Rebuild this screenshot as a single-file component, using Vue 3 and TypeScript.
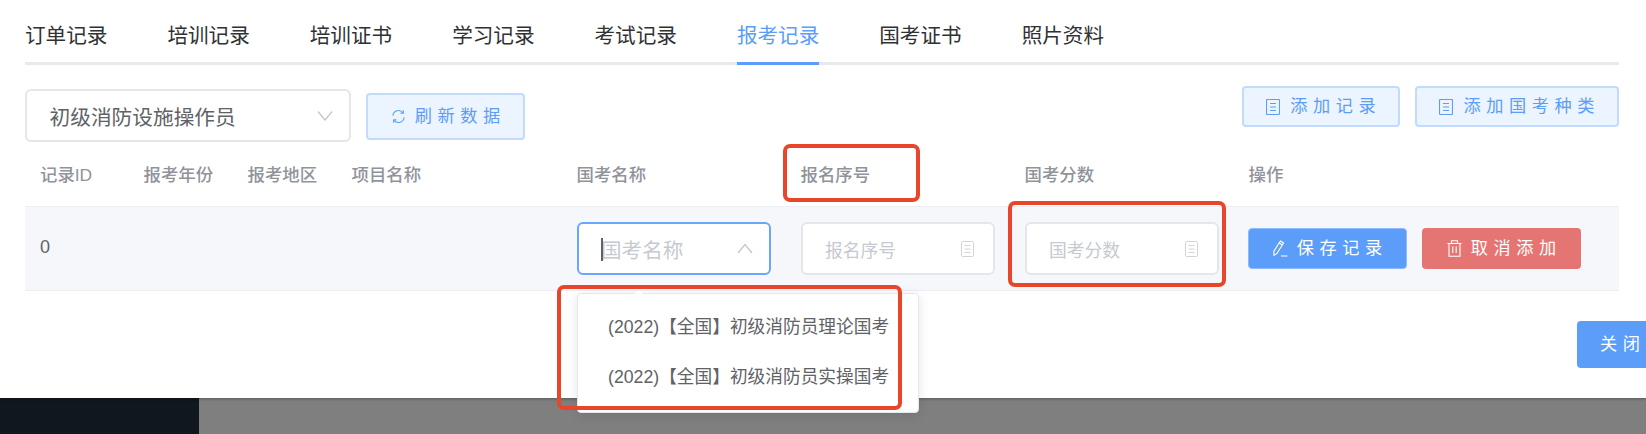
<script setup lang="ts">
const tabs = ['订单记录', '培训记录', '培训证书', '学习记录', '考试记录', '报考记录', '国考证书', '照片资料']
const activeTab = '报考记录'
const columns = ['记录ID', '报考年份', '报考地区', '项目名称', '国考名称', '报名序号', '国考分数', '操作']
const options = ['(2022)【全国】初级消防员理论国考', '(2022)【全国】初级消防员实操国考']
</script>

<template>
  <div class="page">
    <div class="panel">
      <div class="tabs">
        <div v-for="tab in tabs" :key="tab" :class="['tab', tab === activeTab && 'active']">{{ tab }}</div>
      </div>

      <div class="toolbar">
        <div class="toolbar-left">
          <div class="select big">
            <span class="value">初级消防设施操作员</span>
            <svg class="chevron" viewBox="0 0 16 16"><path d="M1 3.5 8 12 15 3.5" /></svg>
          </div>
          <button class="btn plain refresh">
            <svg class="icon spin" viewBox="0 0 16 16">
              <path d="M2 7.2A6 6 0 0 1 12.8 4M14 8.8A6 6 0 0 1 3.2 12" />
              <path d="M10.2 4.4 13.2 4.4 13.2 1.4M5.8 11.6 2.8 11.6 2.8 14.6" />
            </svg>
            <span>刷新数据</span>
          </button>
        </div>
        <div class="toolbar-right">
          <button class="btn plain add">
            <svg class="icon doc-icon" viewBox="0 0 14 16"><rect x="0.5" y="0.5" width="13" height="15" rx="1" /><path d="M4 4.5h6M4 8h6M4 11.5h6" /></svg>
            <span>添加记录</span>
          </button>
          <button class="btn plain add">
            <svg class="icon doc-icon" viewBox="0 0 14 16"><rect x="0.5" y="0.5" width="13" height="15" rx="1" /><path d="M4 4.5h6M4 8h6M4 11.5h6" /></svg>
            <span>添加国考种类</span>
          </button>
        </div>
      </div>

      <div class="table">
        <div class="row head">
          <div v-for="col in columns" :key="col" class="cell">{{ col }}</div>
        </div>
        <div class="row body">
          <div class="cell id">0</div>
          <div class="cell"></div>
          <div class="cell"></div>
          <div class="cell"></div>
          <div class="cell">
            <div class="select focus">
              <span class="caret"></span>
              <span class="placeholder">国考名称</span>
              <svg class="chevron" viewBox="0 0 16 16"><path d="M1 12 8 3.5 15 12" /></svg>
            </div>
          </div>
          <div class="cell">
            <div class="select field">
              <span class="placeholder sm">报名序号</span>
              <svg class="doc" viewBox="0 0 13 16"><rect x="0.5" y="0.5" width="12" height="15" rx="1" /><path d="M3.5 4.5h6M3.5 8h6M3.5 11.5h6" /></svg>
            </div>
          </div>
          <div class="cell">
            <div class="select field">
              <span class="placeholder sm">国考分数</span>
              <svg class="doc" viewBox="0 0 13 16"><rect x="0.5" y="0.5" width="12" height="15" rx="1" /><path d="M3.5 4.5h6M3.5 8h6M3.5 11.5h6" /></svg>
            </div>
          </div>
          <div class="cell actions">
            <button class="btn solid save">
              <svg class="icon tool" viewBox="0 0 15 17"><path d="M0.8 11.4 7.4 1 10.6 3 4 13.4 1 15.2ZM6.2 3 9.4 5M8 16h6.5" /></svg>
              <span>保存记录</span>
            </button>
            <button class="btn solid cancel">
              <svg class="icon tool" viewBox="0 0 15 17"><path d="M0.5 3.5h14M4.5 3.5V0.8h6v2.7M2 3.5v12.7h11V3.5M5.8 6.5v6.5M9.2 6.5v6.5" /></svg>
              <span>取消添加</span>
            </button>
          </div>
        </div>
      </div>

      <div class="footer">
        <button class="btn solid close"><span>关闭</span></button>
      </div>

      <div class="popper">
        <span class="arrow"></span>
        <div v-for="opt in options" :key="opt" class="option">{{ opt }}</div>
      </div>

      <div class="mark mark-serial"></div>
      <div class="mark mark-score"></div>
      <div class="mark mark-options"></div>
    </div>

    <div class="backdrop">
      <div class="sidebar"></div>
      <div class="mask"></div>
    </div>
  </div>
</template>

<style>
html, body {
  margin: 0;
  overflow: hidden;
  background: #fff;
}
</style>

<style scoped>
.page {
  width: 1646px;
  height: 434px;
  display: flex;
  flex-direction: column;
  overflow: hidden;
  font-family: "Liberation Sans", "Noto Sans CJK SC", sans-serif;
}

.panel {
  position: relative;
  height: 398px;
  box-sizing: border-box;
  padding: 0 27px 0 25px;
  background: #fff;
  box-shadow: 0 1px 3px rgba(0, 0, 0, 0.3);
  z-index: 1;
}

.tabs {
  display: flex;
  gap: 60px;
  height: 65px;
  border-bottom: 3px solid #e8e9ef;
  box-sizing: border-box;
}

.tab {
  height: 65px;
  box-sizing: border-box;
  padding-top: 21px;
  font-size: 20.6px;
  line-height: 30px;
  color: #303133;
}

.tab.active {
  color: #5b9df9;
  border-bottom: 3px solid #5b9df9;
}

.toolbar {
  display: flex;
  justify-content: space-between;
  align-items: flex-start;
  margin-top: 21px;
  height: 58px;
}

.toolbar-left {
  display: flex;
  gap: 15px;
  padding-top: 3px;
}

.toolbar-right {
  display: flex;
  gap: 15px;
}

.select {
  display: flex;
  align-items: center;
  box-sizing: border-box;
  height: 53px;
  border: 2px solid #e4e6ec;
  border-radius: 6px;
  background: #fff;
}

.select.big {
  width: 326px;
  padding: 0 16px 0 22.5px;
  font-size: 20.7px;
  color: #606266;
  justify-content: space-between;
}

.chevron {
  width: 16px;
  height: 16px;
  fill: none;
  stroke: #c0c4cc;
  stroke-width: 1.2;
}

.btn {
  display: flex;
  align-items: center;
  justify-content: center;
  box-sizing: border-box;
  margin: 0;
  font-family: inherit;
  border-radius: 4px;
  font-size: 17.2px;
  letter-spacing: 5.6px;
  cursor: pointer;
}

.btn span {
  line-height: 1;
  margin-right: -5.6px;
}

.plain {
  background: #ecf4ff;
  border: 2px solid #c2dbfd;
  color: #5b9df9;
}

.solid {
  border: 1px solid transparent;
  color: #fff;
}

.refresh {
  width: 159px;
  height: 47px;
  margin-top: 4px;
  gap: 9px;
}

.add {
  height: 41px;
  gap: 10px;
}

.toolbar-right .add:first-child {
  width: 158px;
}

.toolbar-right .add:last-child {
  width: 204px;
}

.icon {
  width: 15px;
  height: 15px;
  fill: none;
  stroke: currentColor;
  stroke-width: 1.1;
  flex: none;
}

.doc-icon {
  width: 14px;
  height: 16px;
}

.tool {
  height: 17px;
}

.table {
  margin-top: 2px;
  width: 1594px;
}

.row {
  display: grid;
  grid-template-columns: 103.5px 104px 104px 225px 224px 224px 224px 385.5px;
}

.row.head {
  height: 60px;
  box-sizing: border-box;
  padding-bottom: 6px;
  align-items: center;
  font-size: 17.4px;
  font-weight: 500;
  color: #909399;
}

.row.body {
  height: 85px;
  align-items: center;
  background: #f5f7fb;
  border-top: 1px solid #eceef3;
  border-bottom: 1px solid #eceef3;
  box-sizing: border-box;
  font-size: 18px;
  color: #606266;
}

.cell {
  padding: 0 15px;
}

.id {
  padding-bottom: 2px;
}

.field,
.focus {
  width: 194px;
}

.field {
  padding: 0 19px 0 22.5px;
  justify-content: space-between;
}

.focus {
  position: relative;
  border-color: #6aa6fa;
  padding: 0 16px 0 22.5px;
  justify-content: space-between;
}

.caret {
  position: absolute;
  left: 22.5px;
  top: 13.5px;
  width: 1.5px;
  height: 23px;
  background: #606266;
}

.placeholder {
  font-size: 20.6px;
  color: #c6c9d1;
}

.placeholder.sm {
  font-size: 17.8px;
}

.doc {
  width: 13px;
  height: 16px;
  fill: none;
  stroke: #d2d4db;
  stroke-width: 1;
}

.actions {
  display: flex;
  gap: 15px;
  padding-left: 14.5px;
}

.save,
.cancel {
  width: 159px;
  height: 41px;
  gap: 9px;
}

.save {
  background: #5b9df9;
  border-color: #8cbafb;
}

.cancel {
  background: #e57573;
}

.footer {
  display: flex;
  justify-content: flex-end;
  margin-top: 30px;
  margin-right: -27px;
}

.close {
  width: 69px;
  height: 47px;
  background: #5b9df9;
  border-radius: 4px 0 0 4px;
  justify-content: flex-start;
  padding-left: 22px;
  overflow: hidden;
  white-space: nowrap;
}

.popper {
  position: absolute;
  left: 577px;
  top: 293px;
  width: 342px;
  height: 120px;
  box-sizing: border-box;
  padding-top: 8px;
  background: #fff;
  border: 1px solid #e4e7ed;
  border-radius: 4px;
  box-shadow: 0 2px 12px rgba(0, 0, 0, 0.1);
  z-index: 2;
}

.arrow {
  position: absolute;
  left: 56px;
  top: -2px;
  width: 10px;
  height: 10px;
  border-radius: 2px;
  background: #fff;
  transform: rotate(45deg);
}

.option {
  height: 50px;
  line-height: 50px;
  padding-left: 30px;
  font-size: 17.7px;
  color: #606266;
  white-space: nowrap;
}

.mark {
  position: absolute;
  box-sizing: border-box;
  border: 4px solid #e8452a;
  border-radius: 7px;
  z-index: 3;
}

.mark-serial {
  left: 783px;
  top: 144px;
  width: 137px;
  height: 58px;
}

.mark-score {
  left: 1008px;
  top: 201px;
  width: 218px;
  height: 86px;
}

.mark-options {
  left: 557px;
  top: 285px;
  width: 345px;
  height: 125px;
}

.backdrop {
  flex: 1;
  display: flex;
}

.sidebar {
  width: 199px;
  background: #11171f;
}

.mask {
  flex: 1;
  background: #7f7f7f;
}
</style>
